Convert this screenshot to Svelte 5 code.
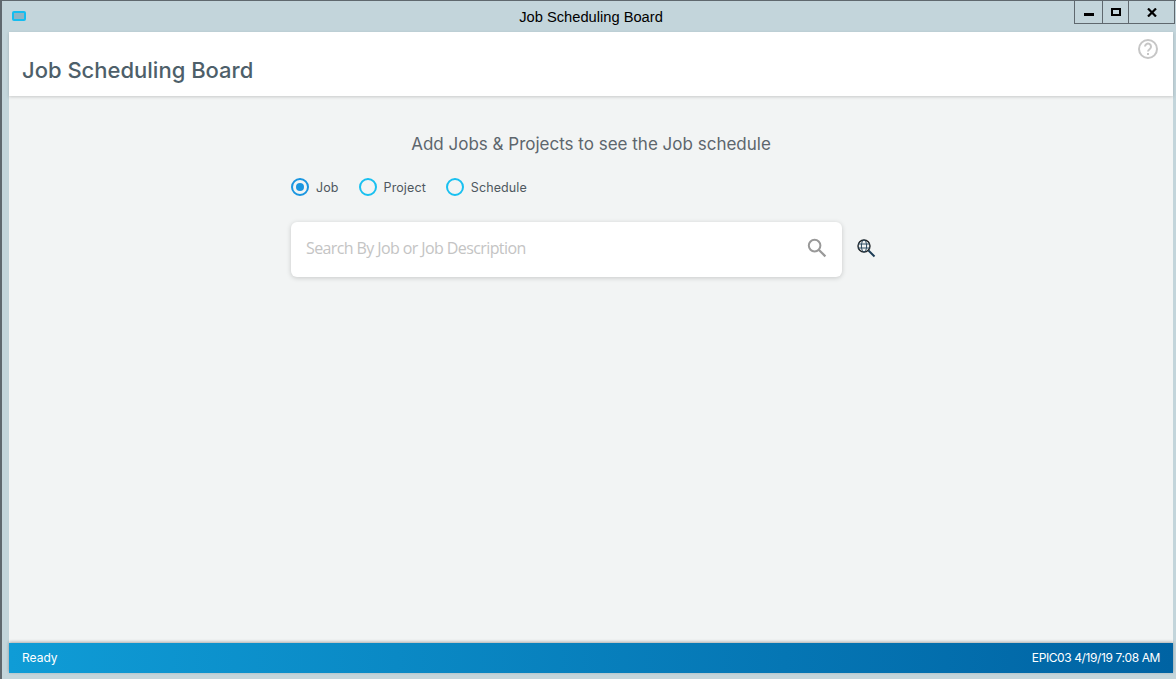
<script lang="ts">
	let mode = $state('job');
	const options = [
		{ id: 'job', label: 'Job' },
		{ id: 'project', label: 'Project' },
		{ id: 'schedule', label: 'Schedule' }
	];
</script>

<div class="window">
	<div class="titlebar">
		<span class="app-icon"></span>
		<span class="title">Job Scheduling Board</span>
		<div class="controls">
			<button class="ctl min" aria-label="Minimize"><i></i></button>
			<button class="ctl max" aria-label="Maximize"><i></i></button>
			<button class="ctl close" aria-label="Close">
				<svg width="10" height="9" viewBox="0 0 10 9"><path d="M1 .5 9 8.5M9 .5 1 8.5" stroke="#000" stroke-width="2.2" fill="none" /></svg>
			</button>
		</div>
	</div>
	<div class="body">
		<header class="head">
			<h1>Job Scheduling Board</h1>
			<svg class="help" width="22" height="22" viewBox="0 0 22 22" fill="none">
				<circle cx="11" cy="11" r="9" stroke="#c6c6c6" stroke-width="2" />
				<path d="M8 8.6a3 3 0 1 1 4.8 2.4c-1.1.8-1.8 1.3-1.8 2.6" stroke="#c6c6c6" stroke-width="2" />
				<rect x="10" y="15" width="2" height="2" fill="#c6c6c6" />
			</svg>
		</header>
		<main class="main">
			<p class="lead">Add Jobs &amp; Projects to see the Job schedule</p>
			<div class="panel">
				<div class="radios">
					{#each options as o}
						<label class="radio">
							<input type="radio" bind:group={mode} value={o.id} />
							<span class="dot" class:on={mode === o.id}></span>
							<span class="lbl">{o.label}</span>
						</label>
					{/each}
				</div>
				<div class="search-row">
					<div class="search">
						<input type="text" placeholder="Search By Job or Job Description" />
						<svg width="20" height="20" viewBox="0 0 20 20" fill="none">
							<circle cx="7.6" cy="7.6" r="5.8" stroke="#999" stroke-width="2" />
							<path d="M12 12l6.4 6.4" stroke="#999" stroke-width="2.2" />
						</svg>
					</div>
					<svg class="globe" width="19" height="19" viewBox="0 0 19 19" fill="none">
						<circle cx="7" cy="7" r="6" stroke="#1f2326" stroke-width="1.4" />
						<ellipse cx="7" cy="7" rx="2.6" ry="6" stroke="#2c4a60" />
						<path d="M1 5h12M1 9h12" stroke="#2c4a60" />
						<path d="M11.5 11.5l6 6" stroke="#1d3c55" stroke-width="2" />
					</svg>
				</div>
			</div>
		</main>
		<footer class="status">
			<span>Ready</span>
			<span class="stamp">EPIC03 4/19/19 7:08 AM</span>
		</footer>
	</div>
</div>

<style>
	:global(body) {
		margin: 0;
		overflow: hidden;
	}

	.window {
		width: 1176px;
		height: 679px;
		box-sizing: border-box;
		display: flex;
		flex-direction: column;
		background: #c3d5db;
		border-left: 2px solid #5f686e;
		border-top: 1px solid #5f686e;
		padding: 0 3px 6px 7px;
		font-family: Inter, "Liberation Sans", sans-serif;
	}

	.titlebar {
		height: 31px;
		flex: none;
		display: flex;
		align-items: center;
		justify-content: center;
		position: relative;
		font: 14.7px "Liberation Sans", Arial, sans-serif;
		color: #000;
	}

	.title {
		margin-top: 1px;
	}

	.app-icon {
		position: absolute;
		left: 3px;
		top: 10px;
		width: 10px;
		height: 6px;
		border: 2px solid #14bdf0;
		border-radius: 2px;
		background: #8db4c4;
	}

	.controls {
		position: absolute;
		right: -2px;
		top: 0;
		display: flex;
		height: 22px;
		border: solid #5f686e;
		border-width: 0 1px 1px 1px;
	}

	.ctl {
		width: 27px;
		padding: 0;
		border: 0;
		border-left: 1px solid #5f686e;
		background: #c3d5db;
		display: flex;
		align-items: center;
		justify-content: center;
	}

	.ctl:first-child {
		border-left: 0;
	}

	.min i {
		display: block;
		width: 10px;
		height: 3px;
		background: #000;
		margin-top: 5px;
	}

	.max {
		width: 26px;
	}

	.max i {
		display: block;
		width: 6px;
		height: 4px;
		border: 2px solid #000;
	}

	.close {
		width: 46px;
	}

	.body {
		flex: 1;
		display: flex;
		flex-direction: column;
		background: #f2f4f4;
		min-height: 0;
	}

	.head {
		height: 64px;
		flex: none;
		box-sizing: border-box;
		background: #fff;
		box-shadow: 0 1px 3px rgba(0, 0, 0, 0.18);
		padding: 23px 13px 0;
		position: relative;
	}

	h1 {
		margin: 0;
		font-size: 22px;
		line-height: 30px;
		font-weight: 500;
		color: #4e5f6a;
	}

	.help {
		position: absolute;
		top: 6px;
		right: 14px;
	}

	.main {
		flex: 1;
		min-height: 0;
		box-sizing: border-box;
		display: flex;
		flex-direction: column;
		align-items: center;
		padding-top: 38px;
	}

	.lead {
		margin: 0;
		font-size: 17px;
		line-height: 20px;
		color: #5d666d;
	}

	.panel {
		width: 590px;
		margin: 23px 10px 0 0;
	}

	.radios {
		display: flex;
		gap: 20px;
		height: 20px;
		align-items: center;
	}

	.radio {
		display: flex;
		align-items: center;
		gap: 7px;
		font-size: 12.5px;
		letter-spacing: 0.1px;
		color: #4f5860;
	}

	.radio input {
		display: none;
	}

	.dot {
		width: 14px;
		height: 14px;
		border: 2px solid #19c0f0;
		border-radius: 50%;
		position: relative;
	}

	.dot.on {
		border-color: #1a96e0;
	}

	.dot.on::after {
		content: '';
		position: absolute;
		inset: 3px;
		border-radius: 50%;
		background: #1a96e0;
	}

	.search-row {
		display: flex;
		align-items: center;
		gap: 15px;
		margin-top: 25px;
	}

	.search {
		width: 551px;
		height: 55px;
		box-sizing: border-box;
		background: #fff;
		border-radius: 6px;
		box-shadow: 0 1px 5px rgba(0, 0, 0, 0.18);
		display: flex;
		align-items: center;
		padding: 0 15px;
	}

	.search input {
		flex: 1;
		min-width: 0;
		border: 0;
		outline: 0;
		background: none;
		padding: 0;
		margin-bottom: 4px;
		font: 16px "Open Sans", sans-serif;
		letter-spacing: -0.6px;
	}

	.search input::placeholder {
		color: #c4c4c4;
		opacity: 1;
	}

	.search svg {
		margin-bottom: 4px;
	}

	.globe {
		margin-top: -2px;
	}

	.status {
		height: 30px;
		flex: none;
		display: flex;
		align-items: center;
		justify-content: space-between;
		padding: 0 13px 2px;
		box-sizing: border-box;
		background: linear-gradient(90deg, #0f9cd6, #0063a3);
		box-shadow: 0 -1px 3px rgba(0, 0, 0, 0.3);
		font-size: 12px;
		color: #fff;
	}

	.stamp {
		letter-spacing: -0.4px;
	}
</style>
